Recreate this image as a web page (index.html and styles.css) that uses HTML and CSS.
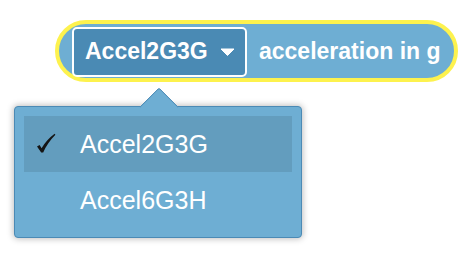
FILE: index.html
```html
<!DOCTYPE html>
<html>
<head>
<meta charset="utf-8">
<link rel="stylesheet" href="styles.css">
</head>
<body>
<div class="stage">
  <div class="block">
    <div class="field">
      <span class="field-text">Accel2G3G</span>
      <svg class="caret" width="15" height="8" viewBox="0 0 15 8"><path d="M1 1 L14 1 L7.5 7.5 Z" fill="#fff" stroke="#fff" stroke-width="1" stroke-linejoin="round"/></svg>
    </div>
    <span class="label">acceleration in g</span>
  </div>
  <div class="menu">
    <div class="arrow-clip"><div class="arrow"></div></div>
    <div class="item selected">
      <span class="check"><svg width="20" height="20" viewBox="0 0 20 20"><path d="M1 13.6 L3.6 12 L5.6 15.2 Q10.5 6.8 18.6 0.8 L19.4 1.8 Q11.5 9.8 7.2 19.4 L5.2 19.4 Z" fill="#151515"/></svg></span>
      <span class="item-text">Accel2G3G</span>
    </div>
    <div class="item"><span class="check"></span><span class="item-text">Accel6G3H</span></div>
  </div>
</div>
</body>
</html>
```

FILE: styles.css
```css
html, body {
  margin: 0;
  padding: 0;
  background: #ffffff;
}
.stage {
  position: relative;
  width: 472px;
  height: 262px;
  padding: 20px 0 0 55px;
  box-sizing: border-box;
  font-family: "Liberation Sans", Arial, sans-serif;
}
.block {
  display: flex;
  align-items: center;
  box-sizing: border-box;
  width: 403px;
  height: 62px;
  border: 4px solid #fdf24e;
  border-radius: 31px;
  background: #6eaed3;
  padding: 0 10px 0 13px;
  white-space: nowrap;
}
.field {
  display: flex;
  align-items: center;
  flex-shrink: 0;
  box-sizing: border-box;
  width: 175px;
  height: 50px;
  border: 2px solid #ffffff;
  border-radius: 5px;
  background: #4a8ab4;
  padding: 0 10px 0 11px;
  margin-top: 1px;
}
.field-text {
  color: #fff;
  font-weight: bold;
  font-size: 23px;
  flex: 1;
}
.caret {
  display: block;
  margin-top: 1px;
}
.label {
  color: #fff;
  font-weight: bold;
  font-size: 23px;
  margin-left: 12px;
  flex-shrink: 0;
}
.menu {
  position: absolute;
  left: 14px;
  top: 106px;
  width: 288px;
  box-sizing: border-box;
  padding: 9px;
  border: 1px solid #4b8ab5;
  border-radius: 4px;
  background: #6eaed3;
  box-shadow: 0 0 6px 1px rgba(0, 0, 0, 0.25);
}
.arrow-clip {
  position: absolute;
  left: 122px;
  top: -21px;
  width: 46px;
  height: 22px;
  overflow: hidden;
}
.arrow {
  position: absolute;
  left: 8px;
  top: 7px;
  width: 28px;
  height: 28px;
  box-sizing: border-box;
  background: #6eaed3;
  border-top: 1px solid #4b8ab5;
  border-left: 1px solid #4b8ab5;
  border-top-left-radius: 3px;
  transform: rotate(45deg);
}
.item {
  display: flex;
  align-items: center;
  height: 56px;
  color: #fff;
  font-size: 25px;
}
.item.selected {
  background: #639dbe;
}
.check {
  display: flex;
  align-items: center;
  width: 56px;
  height: 20px;
  box-sizing: border-box;
  padding-left: 12px;
  margin-top: -2px;
}
.check svg {
  display: block;
}
```
